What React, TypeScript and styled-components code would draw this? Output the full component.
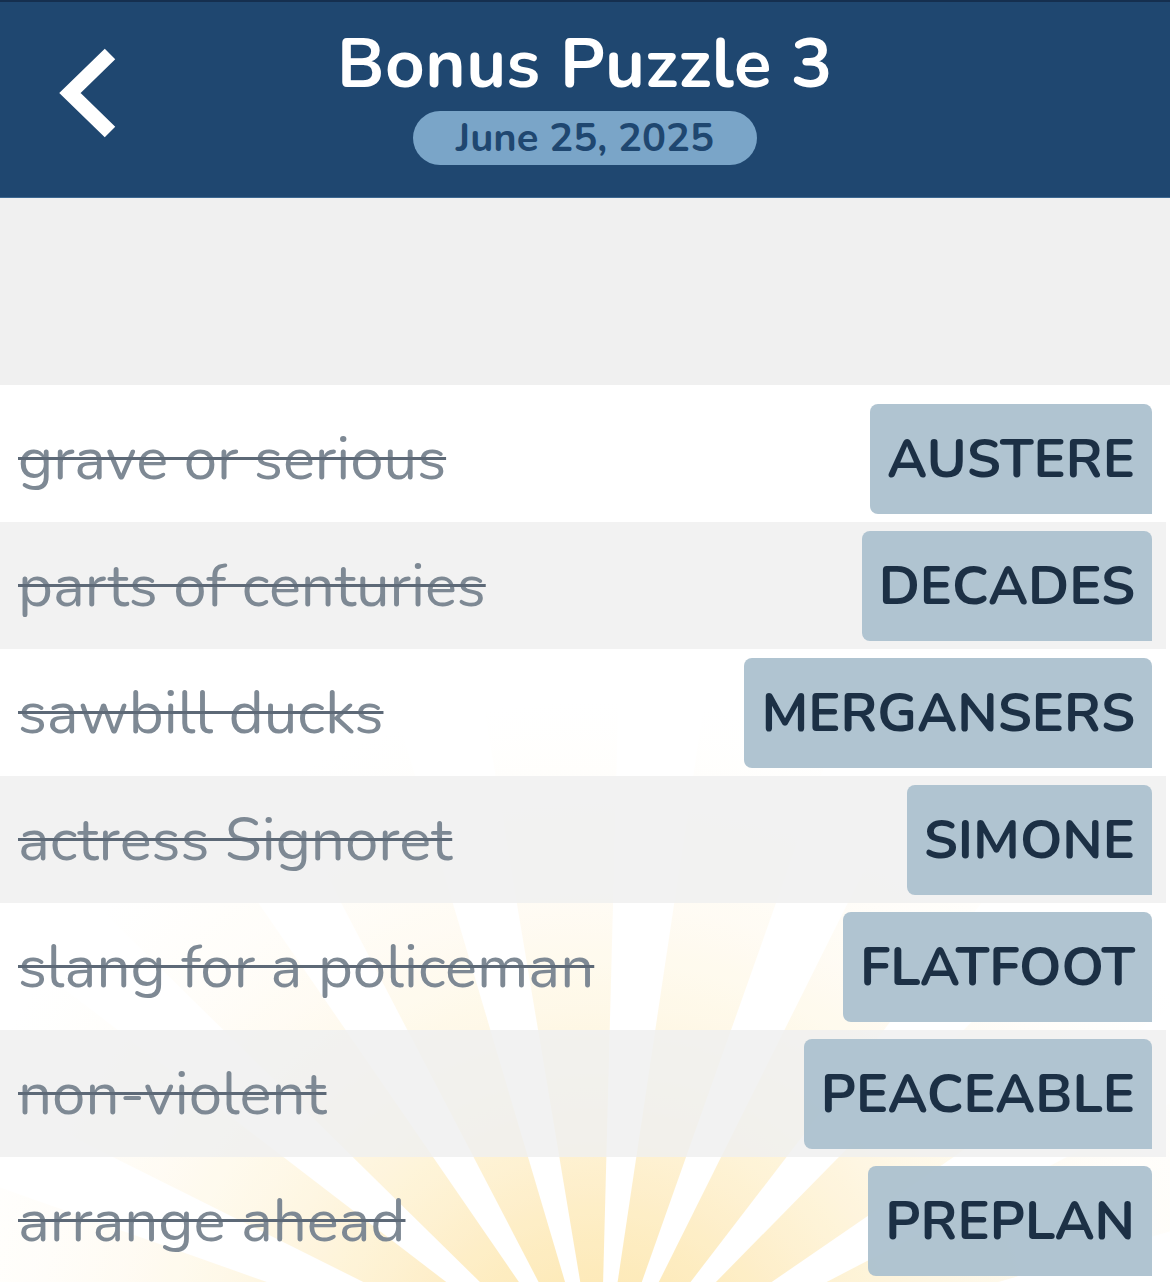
import React from "react";
import styled, { createGlobalStyle } from "styled-components";

const GlobalStyle = createGlobalStyle`
  html, body {
    margin: 0;
    padding: 0;
    background: #ffffff;
  }
  body {
    font-family: Nunito, Lato, "Open Sans", sans-serif;
  }
`;

const clues = [
  { clue: "grave or serious", answer: "AUSTERE" },
  { clue: "parts of centuries", answer: "DECADES" },
  { clue: "sawbill ducks", answer: "MERGANSERS" },
  { clue: "actress Signoret", answer: "SIMONE" },
  { clue: "slang for a policeman", answer: "FLATFOOT" },
  { clue: "non-violent", answer: "PEACEABLE" },
  { clue: "arrange ahead", answer: "PREPLAN" },
];

// sunburst rays, degrees from vertical
const rays = [-76, -58, -40, -22, -4, 14, 32, 50, 68];

function App() {
  const cx = 600;
  const cy = 1015;
  const r = 1300;
  return (
    <Page>
      <GlobalStyle />
      <Header>
        <Back aria-label="back">
          <svg width="60" height="90" viewBox="0 0 60 90">
            <polyline
              points="52,6 12,45 52,84"
              fill="none"
              stroke="#fff"
              strokeWidth="15"
              strokeLinejoin="miter"
            />
          </svg>
        </Back>
        <Title>Bonus Puzzle 3</Title>
        <DatePill>June 25, 2025</DatePill>
      </Header>
      <Spacer />
      <List>
        <Burst viewBox="0 0 1170 900">
          <defs>
            <radialGradient id="fade" cx={cx} cy={cy} r="700" gradientUnits="userSpaceOnUse">
              <stop offset="0" stopColor="#fcdb80" stopOpacity="0.85" />
              <stop offset="0.25" stopColor="#fde3a2" stopOpacity="0.75" />
              <stop offset="0.5" stopColor="#fdebbb" stopOpacity="0.5" />
              <stop offset="0.75" stopColor="#fef3d6" stopOpacity="0.25" />
              <stop offset="1" stopColor="#fff8e6" stopOpacity="0" />
            </radialGradient>
          </defs>
          {rays.map((a) => {
            const w = 5.5;
            const t1 = ((a - w) * Math.PI) / 180;
            const t2 = ((a + w) * Math.PI) / 180;
            const p1 = `${cx + r * Math.sin(t1)},${cy - r * Math.cos(t1)}`;
            const p2 = `${cx + r * Math.sin(t2)},${cy - r * Math.cos(t2)}`;
            return <polygon key={a} points={`${cx},${cy} ${p1} ${p2}`} fill="url(#fade)" />;
          })}
        </Burst>
        {clues.map((c, i) => (
          <Row key={c.answer} $alt={i % 2 === 1}>
            <Clue>{c.clue}</Clue>
            <Answer>{c.answer}</Answer>
          </Row>
        ))}
      </List>
    </Page>
  );
}

export default App;

const Page = styled.div`
  width: 1170px;
  height: 1282px;
  overflow: hidden;
  background: #ffffff;
`;

const Header = styled.header`
  position: relative;
  height: 195px;
  background: #1f4770;
  border-top: 2px solid #152f4f;
  border-bottom: 1px solid #3d6891;
  display: flex;
  flex-direction: column;
  align-items: center;
`;

const Back = styled.div`
  position: absolute;
  left: 58px;
  top: 46px;
  display: flex;
`;

const Title = styled.h1`
  margin: 22px 0 0;
  font-size: 69px;
  line-height: 80px;
  font-weight: 700;
  color: #ffffff;
  letter-spacing: 0.5px;
`;

const DatePill = styled.div`
  margin-top: 7px;
  height: 54px;
  width: 344px;
  border-radius: 27px;
  background: #7aa5c8;
  color: #1f4770;
  font-size: 40px;
  font-weight: 700;
  display: flex;
  align-items: center;
  justify-content: center;
`;

const Spacer = styled.div`
  height: 187px;
  background: #f0f0f0;
`;

const List = styled.div`
  position: relative;
  padding-top: 10px;
  background: #ffffff;
`;

const Burst = styled.svg`
  position: absolute;
  left: 0;
  top: 0;
  width: 1170px;
  height: 900px;
`;

const Row = styled.div<{ $alt: boolean }>`
  position: relative;
  width: 1166px;
  height: 127px;
  box-sizing: border-box;
  padding: 9px 14px 8px 18px;
  display: flex;
  align-items: stretch;
  justify-content: space-between;
  background: ${(p) => (p.$alt ? "rgba(240, 240, 240, 0.85)" : "rgba(255, 255, 255, 0.15)")};
`;

const Clue = styled.div`
  align-self: center;
  font-size: 60px;
  color: #7e8994;
  text-decoration: line-through;
  text-decoration-color: #5d6977;
  text-decoration-thickness: 3px;
  white-space: nowrap;
`;

const Answer = styled.div`
  display: flex;
  align-items: center;
  padding: 0 17px;
  border-radius: 8px 8px 0 8px;
  background: rgba(172, 193, 207, 0.95);
  color: #1c3045;
  font-size: 54px;
  font-weight: 700;
  white-space: nowrap;
`;
